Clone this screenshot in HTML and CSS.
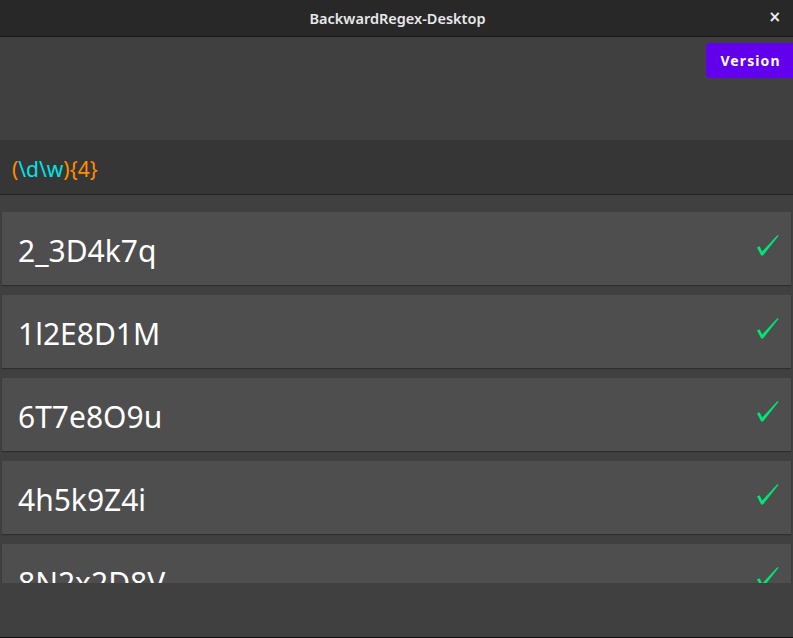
FILE: index.html
```html
<!DOCTYPE html>
<html>
<head>
<meta charset="utf-8">
<link rel="stylesheet" href="styles.css">
</head>
<body>
<div class="window">
  <div class="titlebar">
    <span class="title">BackwardRegex-Desktop</span>
    <span class="close">×</span>
  </div>
  <div class="top">
    <button class="version">Version</button>
  </div>
  <div class="regex"><span class="o">(</span><span class="c">\d\w</span><span class="o">){4}</span></div>
  <div class="list">
    <div class="row"><span class="val">2_3D4k7q</span><svg class="check" width="22" height="21" viewBox="0 0 22 21"><path d="M0 12.5 L2.6 11.3 L5.2 16.5 L20.6 0 L21.6 0.8 L6 20.5 L4.2 20.5 Z" fill="#00e676"/></svg></div>
    <div class="row"><span class="val">1l2E8D1M</span><svg class="check" width="22" height="21" viewBox="0 0 22 21"><path d="M0 12.5 L2.6 11.3 L5.2 16.5 L20.6 0 L21.6 0.8 L6 20.5 L4.2 20.5 Z" fill="#00e676"/></svg></div>
    <div class="row"><span class="val">6T7e8O9u</span><svg class="check" width="22" height="21" viewBox="0 0 22 21"><path d="M0 12.5 L2.6 11.3 L5.2 16.5 L20.6 0 L21.6 0.8 L6 20.5 L4.2 20.5 Z" fill="#00e676"/></svg></div>
    <div class="row"><span class="val">4h5k9Z4i</span><svg class="check" width="22" height="21" viewBox="0 0 22 21"><path d="M0 12.5 L2.6 11.3 L5.2 16.5 L20.6 0 L21.6 0.8 L6 20.5 L4.2 20.5 Z" fill="#00e676"/></svg></div>
    <div class="row"><span class="val">8N2x2D8V</span><svg class="check" width="22" height="21" viewBox="0 0 22 21"><path d="M0 12.5 L2.6 11.3 L5.2 16.5 L20.6 0 L21.6 0.8 L6 20.5 L4.2 20.5 Z" fill="#00e676"/></svg></div>
  </div>
  <div class="bottom"></div>
</div>
</body>
</html>
```

FILE: styles.css
```css
* { box-sizing: border-box; }
html, body { margin: 0; padding: 0; }
body { width: 793px; height: 638px; overflow: hidden; background: #404040; font-family: "Noto Sans", sans-serif; }
.window { display: flex; flex-direction: column; height: 638px; border-bottom: 1px solid #111; }
.titlebar { height: 37px; background: #282828; border-bottom: 1px solid #181818; display: flex; align-items: center; justify-content: center; position: relative; }
.title { color: #e8e8e8; font-size: 14.5px; font-weight: 600; margin-top: -1px; margin-left: 2px; }
.close { position: absolute; right: 12px; top: 8px; color: #f0f0f0; font-size: 15px; font-weight: 700; font-family: "DejaVu Sans", sans-serif; }
.top { height: 103px; display: flex; justify-content: flex-end; align-items: flex-start; padding-top: 6px; }
.version { background: #6200ee; color: #fff; border: none; border-radius: 4px 0 0 4px; width: 87px; height: 35px; font-family: "Noto Sans", sans-serif; font-weight: 700; font-size: 14px; letter-spacing: 1.1px; padding: 0 0 0 2px; }
.regex { height: 55px; background: #363636; border-bottom: 1px solid #222; font-size: 21px; padding-left: 12px; display: flex; align-items: center; padding-top: 3px; }
.o { color: #ff8c00; }
.c { color: #00e5e5; }
.list { height: 388px; overflow: hidden; padding: 17px 2px 0; display: flex; flex-direction: column; gap: 10px; flex-shrink: 0; }
.row { flex-shrink: 0; height: 73px; background: #4e4e4e; box-shadow: 0 1px 1px #2e2e2e; display: flex; align-items: center; justify-content: space-between; padding: 0 12px 0 16px; }
.val { color: #fff; font-size: 30px; margin-top: 4px; }
.check { flex-shrink: 0; margin-top: -7px; }
.bottom { flex: 1; background: #404040; }
```
